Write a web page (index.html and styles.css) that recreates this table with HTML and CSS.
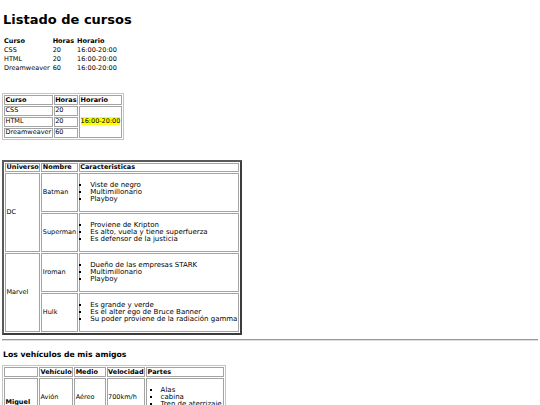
FILE: index.html
```html
<!DOCTYPE html>
<html lang="es">
<head>
<meta charset="utf-8">
<title>Listado de cursos</title>
<link rel="stylesheet" href="styles.css">
</head>
<body>
<h1 class="title">Listado de cursos</h1>

<table class="plain gap-after">
  <tr><th>Curso</th><th>Horas</th><th>Horario</th></tr>
  <tr><td>CSS</td><td>20</td><td>16:00-20:00</td></tr>
  <tr><td>HTML</td><td>20</td><td>16:00-20:00</td></tr>
  <tr><td>Dreamweaver</td><td>60</td><td>16:00-20:00</td></tr>
</table>

<table class="grid thin gap-after">
  <tr><th>Curso</th><th>Horas</th><th>Horario</th></tr>
  <tr><td>CSS</td><td>20</td><td rowspan="3"><span class="hl">16:00-20:00</span></td></tr>
  <tr><td>HTML</td><td>20</td></tr>
  <tr><td>Dreamweaver</td><td>60</td></tr>
</table>

<table class="grid thick">
  <tr><th>Universo</th><th>Nombre</th><th>Caracteristicas</th></tr>
  <tr>
    <td rowspan="2">DC</td>
    <td>Batman</td>
    <td><ul class="list"><li>Viste de negro</li><li>Multimillonario</li><li>Playboy</li></ul></td>
  </tr>
  <tr>
    <td>Superman</td>
    <td><ul class="list"><li>Proviene de Kripton</li><li>Es alto, vuela y tiene superfuerza</li><li>Es defensor de la justicia</li></ul></td>
  </tr>
  <tr>
    <td rowspan="2">Marvel</td>
    <td>Iroman</td>
    <td><ul class="list"><li>Dueño de las empresas STARK</li><li>Multimillonario</li><li>Playboy</li></ul></td>
  </tr>
  <tr>
    <td>Hulk</td>
    <td><ul class="list"><li>Es grande y verde</li><li>Es el alter ego de Bruce Banner</li><li>Su poder proviene de la radiación gamma</li></ul></td>
  </tr>
</table>

<hr class="rule">

<h3 class="subtitle">Los vehículos de mis amigos</h3>

<table class="grid thin">
  <tr><th class="corner"></th><th>Vehículo</th><th>Medio</th><th>Velocidad</th><th class="parts">Partes</th></tr>
  <tr>
    <th rowspan="2">Miguel</th>
    <td>Avión</td><td>Aéreo</td><td>700km/h</td>
    <td><ul class="list list-wide"><li>Alas</li><li>cabina</li><li>Tren de aterrizaje</li></ul></td>
  </tr>
  <tr>
    <td>Coche</td><td>Terrestre</td><td>180km/h</td><td>Ruedas</td>
  </tr>
</table>
</body>
</html>
```

FILE: styles.css
```css
html, body {
  background: #fff;
}
body {
  margin: 2px;
  font-family: "DejaVu Sans", Verdana, sans-serif;
  font-size: 6.5px;
  line-height: 7.3px;
  color: #000;
}
.title {
  font-size: 13px;
  line-height: 16px;
  margin: 9.7px 0 9.5px 1px;
  font-weight: bold;
}
.subtitle {
  font-size: 7.7px;
  line-height: 9px;
  margin: 9.2px 0 5.8px 1px;
  font-weight: bold;
}
table {
  font-size: 6.5px;
  line-height: 7.3px;
}
th {
  text-align: left;
  font-weight: bold;
}
.gap-after {
  margin-bottom: 20px;
}
.plain {
  border-spacing: 1px;
}
.plain th, .plain td {
  padding: 0.25px 1px;
}
.grid {
  border-spacing: 1px;
}
.grid th, .grid td {
  padding: 0.25px 0.5px;
  border: 1px solid #a4a4a4;
  vertical-align: middle;
}
.thin {
  border: 1px solid #c4c4c4;
}
.thick {
  border: 2px solid #3c3c3c;
  border-top-color: #5a5a5a;
  border-left-color: #5a5a5a;
}
.corner {
  width: 31px;
}
.parts {
  width: 75px;
}
.hl {
  background: #ffff00;
}
.list {
  margin: 7.45px 0;
  padding-left: 10px;
  list-style: square;
  font-size: 7px;
  line-height: 7.2px;
}
.list-wide {
  padding-left: 13px;
}
.rule {
  margin: 4px 0;
  height: 0;
  border: 0;
  border-top: 1px solid #9a9a9a;
  border-bottom: 1px solid #dcdcdc;
}
```
